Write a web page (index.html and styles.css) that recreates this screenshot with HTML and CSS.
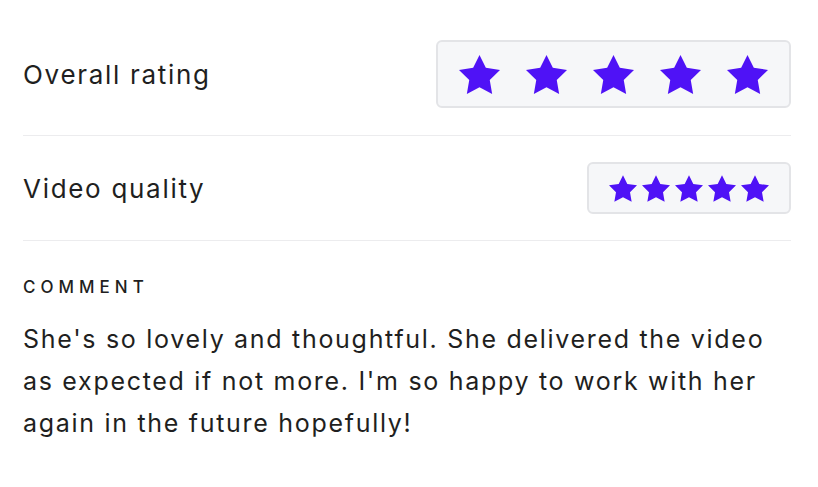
FILE: index.html
```html
<!DOCTYPE html>
<html>
<head>
<meta charset="utf-8">
<link rel="stylesheet" href="styles.css">
</head>
<body>
<main class="review">
  <div class="row row-first">
    <span class="label">Overall rating</span>
    <div class="stars stars-lg">
      <svg viewBox="2 2 20 19.02"><polygon points="12,2 15.09,8.26 22,9.27 17,14.14 18.18,21.02 12,17.77 5.82,21.02 7,14.14 2,9.27 8.91,8.26"/></svg>
      <svg viewBox="2 2 20 19.02"><polygon points="12,2 15.09,8.26 22,9.27 17,14.14 18.18,21.02 12,17.77 5.82,21.02 7,14.14 2,9.27 8.91,8.26"/></svg>
      <svg viewBox="2 2 20 19.02"><polygon points="12,2 15.09,8.26 22,9.27 17,14.14 18.18,21.02 12,17.77 5.82,21.02 7,14.14 2,9.27 8.91,8.26"/></svg>
      <svg viewBox="2 2 20 19.02"><polygon points="12,2 15.09,8.26 22,9.27 17,14.14 18.18,21.02 12,17.77 5.82,21.02 7,14.14 2,9.27 8.91,8.26"/></svg>
      <svg viewBox="2 2 20 19.02"><polygon points="12,2 15.09,8.26 22,9.27 17,14.14 18.18,21.02 12,17.77 5.82,21.02 7,14.14 2,9.27 8.91,8.26"/></svg>
    </div>
  </div>
  <div class="row">
    <span class="label">Video quality</span>
    <div class="stars stars-sm">
      <svg viewBox="2 2 20 19.02"><polygon points="12,2 15.09,8.26 22,9.27 17,14.14 18.18,21.02 12,17.77 5.82,21.02 7,14.14 2,9.27 8.91,8.26"/></svg>
      <svg viewBox="2 2 20 19.02"><polygon points="12,2 15.09,8.26 22,9.27 17,14.14 18.18,21.02 12,17.77 5.82,21.02 7,14.14 2,9.27 8.91,8.26"/></svg>
      <svg viewBox="2 2 20 19.02"><polygon points="12,2 15.09,8.26 22,9.27 17,14.14 18.18,21.02 12,17.77 5.82,21.02 7,14.14 2,9.27 8.91,8.26"/></svg>
      <svg viewBox="2 2 20 19.02"><polygon points="12,2 15.09,8.26 22,9.27 17,14.14 18.18,21.02 12,17.77 5.82,21.02 7,14.14 2,9.27 8.91,8.26"/></svg>
      <svg viewBox="2 2 20 19.02"><polygon points="12,2 15.09,8.26 22,9.27 17,14.14 18.18,21.02 12,17.77 5.82,21.02 7,14.14 2,9.27 8.91,8.26"/></svg>
    </div>
  </div>
  <section class="comment">
    <h3 class="comment-title">COMMENT</h3>
    <p class="comment-text">She's so lovely and thoughtful. She delivered the video as expected if not more. I'm so happy to work with her again in the future hopefully!</p>
  </section>
</main>
</body>
</html>
```

FILE: styles.css
```css
* { box-sizing: border-box; }
html, body { margin: 0; padding: 0; background: #ffffff; }
body {
  font-family: "Inter", "Noto Sans", sans-serif;
  color: #1f1f21;
}
.review {
  padding: 14px 27px 0 23px;
}
.row {
  display: flex;
  align-items: center;
  justify-content: space-between;
  padding: 26px 0 26px;
  border-bottom: 1px solid #ececee;
}
.row-first {
  padding-bottom: 27px;
}
.label {
  font-size: 26px;
  font-weight: 400;
  letter-spacing: 1.7px;
}
.stars {
  display: flex;
  align-items: center;
  background: #f6f7f9;
  border: 2px solid #e3e4e7;
  border-radius: 6px;
}
.stars svg { fill: #4f12f6; display: block; }
.stars-lg {
  width: 355px;
  height: 68px;
  justify-content: center;
  gap: 26px;
}
.stars-lg svg { width: 41px; height: 39px; }
.stars-sm {
  width: 204px;
  height: 52px;
  justify-content: center;
  gap: 5px;
}
.stars-sm svg { width: 28px; height: 27px; }
.comment { padding-top: 36px; }
.comment-title {
  margin: 0;
  font-size: 17px;
  font-weight: 500;
  letter-spacing: 5px;
  line-height: 20px;
}
.comment-text {
  margin: 21px 0 0;
  font-size: 25px;
  line-height: 42px;
  max-width: 770px;
  letter-spacing: 1.7px;
}
```
